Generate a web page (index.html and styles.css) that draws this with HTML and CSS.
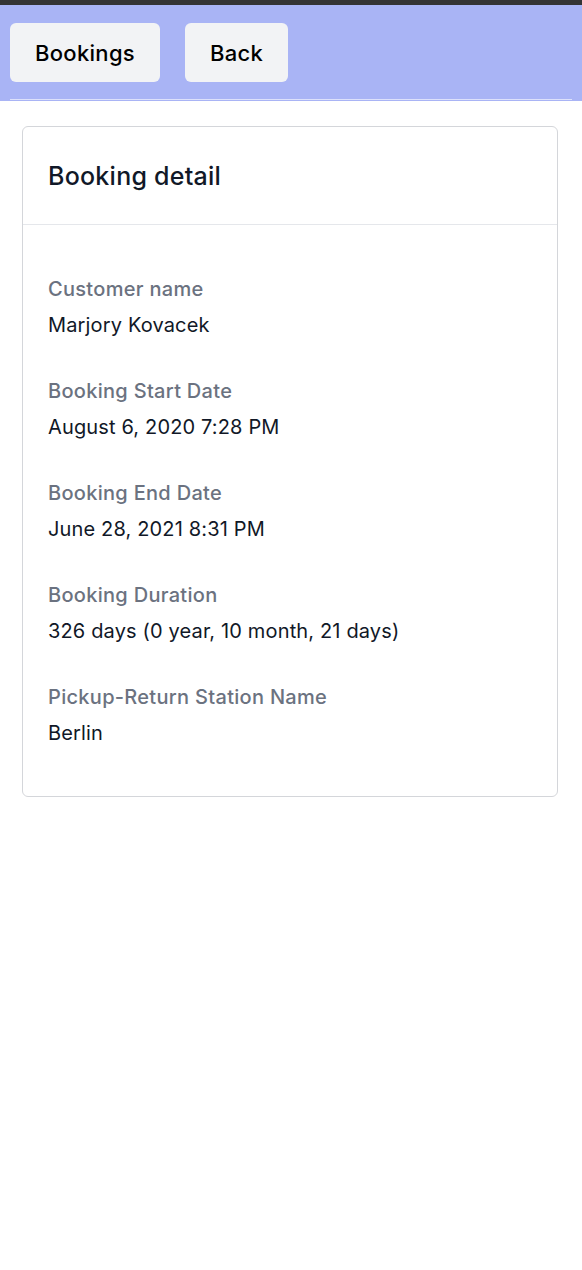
FILE: index.html
```html
<!DOCTYPE html>
<html>
<head>
<meta charset="utf-8">
<link rel="stylesheet" href="styles.css">
</head>
<body>
<div class="topbar"></div>
<header class="header">
  <nav class="nav">
    <button class="btn">Bookings</button>
    <button class="btn">Back</button>
  </nav>
  <div class="divider"></div>
</header>
<main class="main">
  <section class="card">
    <div class="card-head">
      <h1 class="title">Booking detail</h1>
    </div>
    <dl class="card-body">
      <div class="item">
        <dt class="label">Customer name</dt>
        <dd class="value">Marjory Kovacek</dd>
      </div>
      <div class="item">
        <dt class="label">Booking Start Date</dt>
        <dd class="value">August 6, 2020 7:28 PM</dd>
      </div>
      <div class="item">
        <dt class="label">Booking End Date</dt>
        <dd class="value">June 28, 2021 8:31 PM</dd>
      </div>
      <div class="item">
        <dt class="label">Booking Duration</dt>
        <dd class="value">326 days (0 year, 10 month, 21 days)</dd>
      </div>
      <div class="item">
        <dt class="label">Pickup-Return Station Name</dt>
        <dd class="value">Berlin</dd>
      </div>
    </dl>
  </section>
</main>
</body>
</html>
```
FILE: styles.css
```css
* { box-sizing: border-box; }
html, body {
  margin: 0;
  padding: 0;
  background: #ffffff;
  font-family: Inter, "Noto Sans", sans-serif;
}
.topbar {
  height: 5px;
  background: #343434;
}
.header {
  background: #a9b4f5;
  height: 96px;
  display: flex;
  flex-direction: column;
  justify-content: space-between;
  padding-top: 18px;
  padding-bottom: 1px;
}
.nav {
  display: flex;
  gap: 25px;
  padding: 0 10px;
}
.btn {
  height: 59px;
  border: none;
  border-radius: 6px;
  background: #f2f3f5;
  color: #000;
  font-family: Inter, "Noto Sans", sans-serif;
  font-size: 22px;
  font-weight: 500;
  letter-spacing: 0.3px;
  padding: 0 25px;
  cursor: pointer;
}
.divider {
  height: 1px;
  margin: 0 10px;
  background: #dde1fb;
}
.main {
  padding: 25px 24px 0 22px;
}
.card {
  border: 1px solid #d4d6da;
  border-radius: 6px;
  background: #fff;
}
.card-head {
  padding: 33px 25px 32px;
  border-bottom: 1px solid #e5e7eb;
}
.title {
  margin: 0;
  font-size: 25px;
  line-height: 32px;
  font-weight: 500;
  letter-spacing: 0.25px;
  color: #111827;
}
.card-body {
  margin: 0;
  padding: 49px 25px 48px;
  display: flex;
  flex-direction: column;
  gap: 36px;
}
.item {
  display: flex;
  flex-direction: column;
  gap: 6px;
}
.label {
  font-size: 20px;
  line-height: 30px;
  font-weight: 500;
  letter-spacing: 0.3px;
  color: #6b7280;
}
.value {
  margin: 0;
  font-size: 20px;
  line-height: 30px;
  letter-spacing: 0.15px;
  color: #111827;
}
```
